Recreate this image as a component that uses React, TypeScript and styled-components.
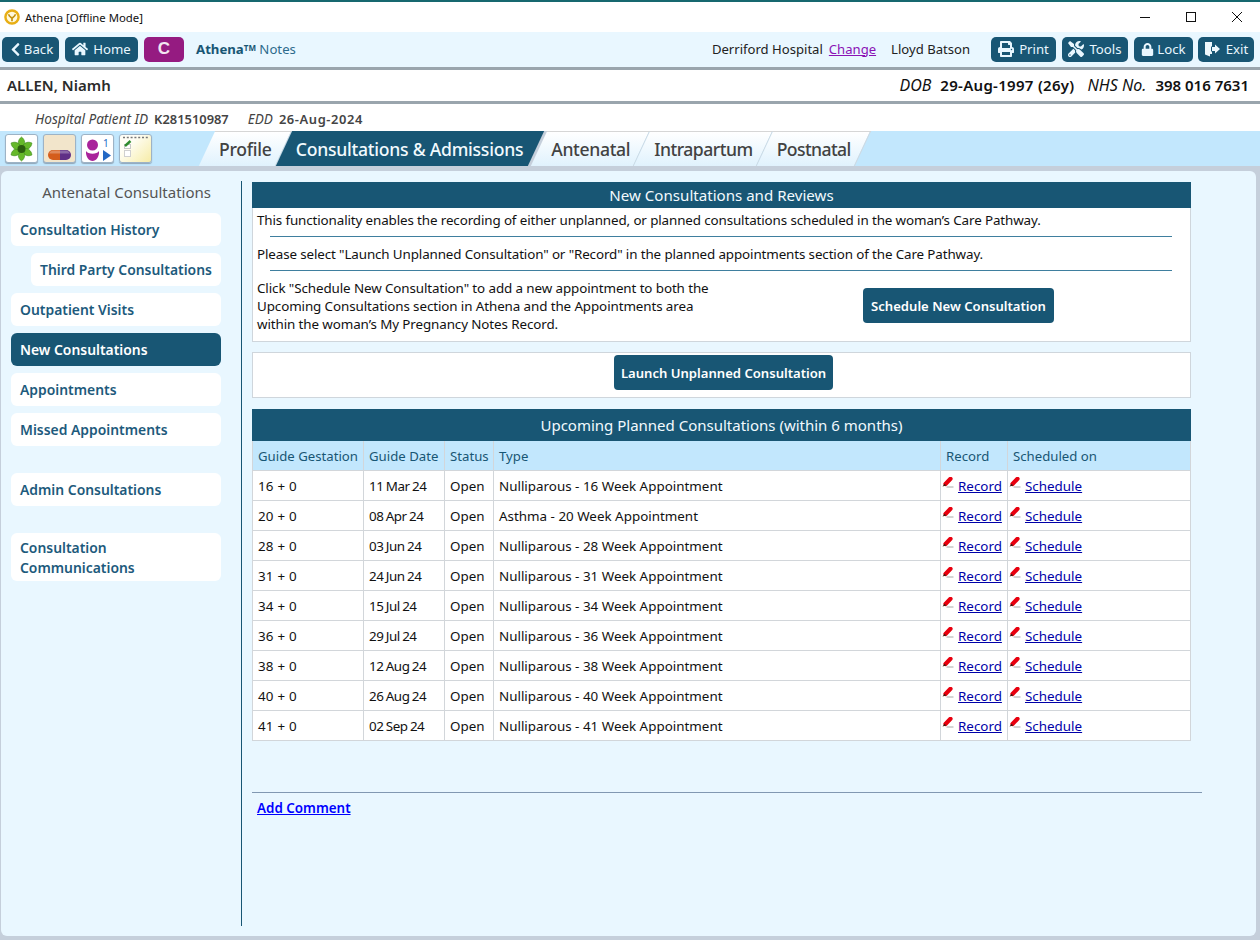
import React from "react";
import styled, { createGlobalStyle } from "styled-components";
import { FaChevronLeft, FaHome, FaPrint, FaTools, FaLock } from "react-icons/fa";

const Global = createGlobalStyle`
  html, body { margin: 0; padding: 0; background: #fff; }
  body { font-family: "Noto Sans", "Open Sans", sans-serif; font-size: 13.4px; color: #111; }
  * { box-sizing: border-box; }
`;

const Win = styled.div`width: 1260px; height: 940px; overflow: hidden; display: flex; flex-direction: column; background: #c5cfdb;`;
const TitleBar = styled.div`
  height: 32px; flex: none; background: #fff; border-top: 2px solid #17686f;
  display: flex; align-items: center; padding: 0 0 0 4px; font-size: 11.35px; color: #111; gap: 5px;
`;
const WinControls = styled.div`margin-left: auto; display: flex; align-items: center;`;
const WinBtn = styled.div`width: 46px; height: 30px; display: flex; align-items: center; justify-content: center;`;

const NavBar = styled.div`
  height: 38px; flex: none; background: #e9f7ff; border-bottom: 3px solid #9aa5ad;
  display: flex; align-items: center; padding: 1px 6px 1px 2px;
`;
const NavBtn = styled.div<{ $w: number; $ml?: number; $bg?: string; $gap?: number }>`
  width: ${p => p.$w}px; margin-left: ${p => p.$ml ?? 0}px; height: 25px; border-radius: 5px;
  background: ${p => p.$bg ?? "#185674"}; color: #e9f7ff; font-size: 13.2px; padding-bottom: 1px;
  display: flex; align-items: center; justify-content: center; gap: ${p => p.$gap ?? 5}px; flex: none;
`;
const CLetter = styled.span`font-family: "Liberation Sans", sans-serif; font-weight: 700; font-size: 17px; color: #f3e6f1;`;
const Brand = styled.div`margin: 0 0 2px 12px; color: #2d6b8c; font-size: 13.2px; b { color: #185674; font-weight: 700; } sup { font-size: 8px; font-weight: 700; color: #185674; vertical-align: 3px; line-height: 0; }`;
const NavRight = styled.div`margin-left: auto; display: flex; align-items: center; font-size: 13.1px; color: #222;`;
const NavText = styled.span`margin-bottom: 2px;`;
const ChangeLink = styled.a`color: #8a12b5; text-decoration: underline; margin: 0 15px 2px 6px;`;
const NavName = styled(NavText)`margin-right: 21px;`;

const PatientRow = styled.div`
  height: 34px; flex: none; background: #fff; border-bottom: 3px solid #9aa5ad;
  display: flex; align-items: center; padding: 0 11px 2px 7px; font-size: 15px; color: #111;
`;
const PatientName = styled.div`font-weight: 600; color: #2b2b2b;`;
const PatientRight = styled.div`margin-left: auto; display: flex; gap: 13px; align-items: baseline;`;
const Em = styled.i`font-weight: 400; margin-right: 9px; font-size: 16px;`;
const Strong = styled.span<{ $ls?: number }>`font-weight: 600; letter-spacing: ${p => p.$ls ?? 0}px;`;

const MetaRow = styled.div`
  height: 27px; flex: none; background: #fff; display: flex; align-items: center;
  padding-left: 35px; font-size: 13.6px; color: #444; gap: 19px; padding-top: 1px;
`;
const MetaVal = styled.span<{ $ls?: number }>`font-weight: 600; margin-left: 6px; font-size: 12.9px; letter-spacing: ${p => p.$ls ?? 0}px;`;

const TabBar = styled.div`
  height: 35px; flex: none; background: #c2e7fd; display: flex; align-items: stretch; padding-left: 5px; overflow: hidden;
`;
const Tools = styled.div`display: flex; gap: 5px; padding-top: 3px; width: 202px; flex: none;`;
const ToolBtn = styled.div<{ $bg?: string }>`
  width: 33px; height: 29px; border-radius: 3px; background: ${p => p.$bg ?? "#fff"};
  border: 1px solid #9db3c6; display: flex; box-shadow: 0 1px 1px #8fa6b8;
`;
const Tab = styled.div<{ $active?: boolean; $ls: number }>`
  position: relative; padding: 0 ${p => (p.$active ? 16 : 12)}px 0 12px;
  display: flex; align-items: center; font-size: 17.6px; letter-spacing: ${p => p.$ls}px; font-weight: 500; z-index: 0;
  color: ${p => (p.$active ? "#f2fafe" : "#424242")};
  &::before {
    content: ""; position: absolute; inset: 0; z-index: -1; transform: skewX(-25deg);
    background: ${p => (p.$active ? "#185674" : "linear-gradient(#fff, #e0f2fd)")};
    border-top: ${p => (p.$active ? "none" : "1px solid #d6d6d6")};
    border-right: ${p => (p.$active ? "4px solid #c5cfdb" : "1px solid #cfd8e0")};
  }
`;

const Panel = styled.div`
  flex: 1; margin: 5px 4px 4px 1px; background: #e9f7ff; border-radius: 6px; display: flex; min-height: 0; padding: 10px 0 10px 10px;
`;
const Side = styled.div`width: 231px; flex: none; border-right: 1px solid #185674; display: flex; flex-direction: column; padding-right: 20px;`;
const SideTitle = styled.div`text-align: right; padding-right: 10px; font-size: 15px; color: #555; height: 32px; line-height: 23px;`;
const SideItem = styled.div<{ $active?: boolean; $indent?: boolean; $gap?: number; $two?: boolean }>`
  margin-left: ${p => (p.$indent ? 20 : 0)}px; margin-bottom: ${p => p.$gap ?? 7}px;
  min-height: 33px; border-radius: 6px; padding: ${p => (p.$two ? "5px 9px 3px" : "7px 9px 6px")}; line-height: 20px; font-size: 13.9px; font-weight: 600;
  background: ${p => (p.$active ? "#185674" : "#fff")}; color: ${p => (p.$active ? "#fff" : "#1d5a7c")};
`;

const Main = styled.div`flex: 1; padding: 1px 0 0 10px; display: flex; flex-direction: column; min-width: 0;`;
const Box = styled.div`width: 939px; background: #fff; border: 1px solid #cfd6dc;`;
const FirstBox = styled(Box)`height: 160px; margin-bottom: 10px;`;
const BoxHead = styled.div`height: 26px; background: #185674; color: #f2fafe; font-size: 15.1px; display: flex; align-items: center; justify-content: center; margin: -1px -1px 0;`;
const Para = styled.div`padding: 3px 4px 0; height: 22px; line-height: 19px; white-space: nowrap; letter-spacing: -0.12px;`;
const Rule = styled.div`height: 1px; background: #3f7f9f; margin: 6px 18px 5px 17px;`;
const SchedRow = styled.div`display: flex; padding: 0 4px; margin-top: 8px; align-items: flex-start;`;
const SchedText = styled.div`width: 606px; line-height: 18px; flex: none; white-space: nowrap; letter-spacing: -0.1px;`;
const ActionBtn = styled.div<{ $w: number }>`
  width: ${p => p.$w}px; height: 35px; border-radius: 4px; background: #185674; color: #fff; font-weight: 600; font-size: 13.1px;
  display: inline-flex; align-items: center; justify-content: center; flex: none;
`;
const SchedBtn = styled(ActionBtn)`margin-top: 9px;`;
const LaunchBox = styled(Box)`height: 46px; display: flex; align-items: flex-start; justify-content: center; padding: 2px 0 0 4px; margin-bottom: 11px;`;

const Table = styled.table`
  width: 939px; border-collapse: collapse; background: #fff; table-layout: fixed;
  td, th { border: 1px solid #d2d6da; padding: 0 5px; font-weight: 400; text-align: left; height: 30px; white-space: nowrap; }
`;
const Col = styled.col<{ $w?: number }>`width: ${p => (p.$w ? `${p.$w}px` : "auto")};`;
const TitleCell = styled.th`
  && { background: #185674; color: #f2fafe; text-align: center; font-size: 15px; height: 31px; border-color: #185674; padding-bottom: 1px; }
`;
const HeadCell = styled.th`
  && { background: #c2e7fd; color: #185674; font-size: 13.2px; }
`;
const DateCell = styled.td`letter-spacing: -0.5px; word-spacing: -0.5px;`;
const GestCell = styled.td`letter-spacing: 0.2px;`;
const LinkCell = styled.td`&& { padding-left: 1px; }`;
const Linky = styled.a`color: #0000a8; text-decoration: underline; margin-left: 3px;`;
const PencilWrap = styled.span`display: inline-block; vertical-align: 1px; width: 13px; height: 13px; line-height: 0;`;

const Footer = styled.div`width: 950px; margin-top: 51px; border-top: 1px solid #8198b2; padding: 6px 5px;`;
const AddComment = styled.a`color: #0000ff; font-weight: 600; text-decoration: underline;`;

const Pencil = () => (
  <PencilWrap>
    <svg width="13" height="13" viewBox="0 0 13 13">
      <path d="M3.5 7 L8.5 1.8" stroke="#e8000f" strokeWidth="4.2" strokeLinecap="round" />
      <path d="M0.5 9.6 L2.6 6.8 L4.2 8.6 Z" fill="#3a1a10" />
      <path d="M4.5 10 H11.5" stroke="#a8a8a8" strokeWidth="1" />
    </svg>
  </PencilWrap>
);

const ExitIcon = () => (
  <svg width="17" height="16" viewBox="0 0 17 16" fill="#eef8fd">
    <path d="M1 1 H8 V5.5 H7 V10.5 H8 V13 H6 V15.5 L1 13.5 Z" />
    <path d="M8 6 H11 V3.5 L16 8 L11 12.5 V10 H8 Z" />
  </svg>
);

const leafAngles = [0, 60, 120, 180, 240, 300];

const rows = [
  ["16 + 0", "11 Mar 24", "Nulliparous - 16 Week Appointment"],
  ["20 + 0", "08 Apr 24", "Asthma - 20 Week Appointment"],
  ["28 + 0", "03 Jun 24", "Nulliparous - 28 Week Appointment"],
  ["31 + 0", "24 Jun 24", "Nulliparous - 31 Week Appointment"],
  ["34 + 0", "15 Jul 24", "Nulliparous - 34 Week Appointment"],
  ["36 + 0", "29 Jul 24", "Nulliparous - 36 Week Appointment"],
  ["38 + 0", "12 Aug 24", "Nulliparous - 38 Week Appointment"],
  ["40 + 0", "26 Aug 24", "Nulliparous - 40 Week Appointment"],
  ["41 + 0", "02 Sep 24", "Nulliparous - 41 Week Appointment"],
];

export default function App() {
  return (
    <Win>
      <Global />
      <TitleBar>
        <svg width="16" height="16" viewBox="0 0 17 17">
          <circle cx="8.5" cy="8.5" r="7" fill="#fff8dc" stroke="#e8ae14" strokeWidth="2.6" />
          <path d="M5 5.5 C5 8 7 8.5 8.5 9.5 C10 8.5 12 8 12 5.5 M8.5 9.5 V13" stroke="#c4920f" strokeWidth="1.8" fill="none" />
        </svg>
        <span>Athena [Offline Mode]</span>
        <WinControls>
          <WinBtn><svg width="12" height="12"><path d="M1 6.5 H11" stroke="#111" /></svg></WinBtn>
          <WinBtn><svg width="12" height="12"><rect x="1.5" y="1.5" width="9" height="9" fill="none" stroke="#111" /></svg></WinBtn>
          <WinBtn><svg width="12" height="12"><path d="M1 1 L11 11 M11 1 L1 11" stroke="#111" /></svg></WinBtn>
        </WinControls>
      </TitleBar>

      <NavBar>
        <NavBtn $w={57} $gap={1}><FaChevronLeft size={15} />Back</NavBtn>
        <NavBtn $w={73} $ml={6}><FaHome size={16} />Home</NavBtn>
        <NavBtn $w={40} $ml={6} $bg="#951b81"><CLetter>C</CLetter></NavBtn>
        <Brand><b>Athena</b><sup>TM</sup> Notes</Brand>
        <NavRight>
          <NavText>Derriford Hospital</NavText>
          <ChangeLink>Change</ChangeLink>
          <NavName>Lloyd Batson</NavName>
          <NavBtn $w={65}><FaPrint size={16} />Print</NavBtn>
          <NavBtn $w={66} $ml={6}><FaTools size={16} />Tools</NavBtn>
          <NavBtn $w={59} $ml={6} $gap={3}><FaLock size={13} />Lock</NavBtn>
          <NavBtn $w={56} $ml={5}><ExitIcon />Exit</NavBtn>
        </NavRight>
      </NavBar>

      <PatientRow>
        <PatientName>ALLEN, Niamh</PatientName>
        <PatientRight>
          <span><Em>DOB</Em><Strong $ls={0.3}>29-Aug-1997 (26y)</Strong></span>
          <span><Em>NHS No.</Em><Strong>398 016 7631</Strong></span>
        </PatientRight>
      </PatientRow>

      <MetaRow>
        <span><i>Hospital Patient ID</i><MetaVal>K281510987</MetaVal></span>
        <span><i>EDD</i><MetaVal $ls={0.6}>26-Aug-2024</MetaVal></span>
      </MetaRow>

      <TabBar>
        <Tools>
          <ToolBtn>
            <svg width="31" height="27" viewBox="0 0 31 27">
              {leafAngles.map(a => (
                <path key={a} d="M15.5 14 C10.5 9.5 12 4.5 15.5 2 C19 4.5 20.5 9.5 15.5 14 Z" fill="#66b82a" stroke="#3f8f1c" strokeWidth="0.6" transform={`rotate(${a} 15.5 14)`} />
              ))}
              <circle cx="15.5" cy="14" r="4" fill="#2c5d10" />
            </svg>
          </ToolBtn>
          <ToolBtn $bg="#f2e5cb">
            <svg width="31" height="27" viewBox="0 0 31 27">
              <path d="M9 15 H16 V25 H9 A5 5 0 0 1 9 15 Z" fill="#d45d1c" />
              <path d="M16 15 H22 A5 5 0 0 1 22 25 H16 Z" fill="#5f2f86" />
              <path d="M9 15.5 H22 A5 4 0 0 1 26 18.5 H5 A5 4 0 0 1 9 15.5 Z" fill="#fff" opacity=".28" />
            </svg>
          </ToolBtn>
          <ToolBtn>
            <svg width="31" height="27" viewBox="0 0 31 27">
              <circle cx="10.5" cy="10" r="5.5" fill="#a9239b" />
              <path d="M4 16 C6 19.5 15 19.5 17 16 C17.5 22 14 26 10.5 26 C7 26 3.5 22 4 16 Z" fill="#a9239b" />
              <path d="M21 15 L29 20.5 L21 26 Z" fill="#2368c4" />
              <text x="21" y="12" fontSize="10" fill="#2368c4" fontFamily="Noto Sans, sans-serif">1</text>
            </svg>
          </ToolBtn>
          <ToolBtn $bg="linear-gradient(135deg,#fffef6 30%,#f6eca6)">
            <svg width="31" height="27" viewBox="0 0 31 27">
              <path d="M3 2.5 H29" stroke="#777" strokeWidth="1.4" strokeDasharray="2 1.8" />
              <rect x="4.5" y="9.5" width="6" height="4" fill="#fff" stroke="#c8c8c8" />
              <rect x="4.5" y="15.5" width="6" height="6" fill="#fff" stroke="#d0d0d0" />
              <path d="M5 11 L10.5 6" stroke="#2e8b2e" strokeWidth="2.4" />
            </svg>
          </ToolBtn>
        </Tools>
        <Tab $ls={-0.25}>Profile</Tab>
        <Tab $active $ls={-0.25}>Consultations &amp; Admissions</Tab>
        <Tab $ls={-0.35}>Antenatal</Tab>
        <Tab $ls={-0.5}>Intrapartum</Tab>
        <Tab $ls={-0.6}>Postnatal</Tab>
      </TabBar>

      <Panel>
        <Side>
          <SideTitle>Antenatal Consultations</SideTitle>
          <SideItem>Consultation History</SideItem>
          <SideItem $indent>Third Party Consultations</SideItem>
          <SideItem>Outpatient Visits</SideItem>
          <SideItem $active>New Consultations</SideItem>
          <SideItem>Appointments</SideItem>
          <SideItem $gap={27}>Missed Appointments</SideItem>
          <SideItem $gap={27}>Admin Consultations</SideItem>
          <SideItem $two>Consultation Communications</SideItem>
        </Side>
        <Main>
          <FirstBox>
            <BoxHead>New Consultations and Reviews</BoxHead>
            <Para>This functionality enables the recording of either unplanned, or planned consultations scheduled in the woman’s Care Pathway.</Para>
            <Rule />
            <Para>Please select "Launch Unplanned Consultation" or "Record" in the planned appointments section of the Care Pathway.</Para>
            <Rule />
            <SchedRow>
              <SchedText>
                Click "Schedule New Consultation" to add a new appointment to both the<br />
                Upcoming Consultations section in Athena and the Appointments area<br />
                within the woman’s My Pregnancy Notes Record.
              </SchedText>
              <SchedBtn $w={191}>Schedule New Consultation</SchedBtn>
            </SchedRow>
          </FirstBox>
          <LaunchBox>
            <ActionBtn $w={219}>Launch Unplanned Consultation</ActionBtn>
          </LaunchBox>
          <Table>
            <colgroup>
              <Col $w={111} />
              <Col $w={81} />
              <Col $w={49} />
              <Col $w={447} />
              <Col $w={67} />
              <Col />
            </colgroup>
            <thead>
              <tr><TitleCell colSpan={6}>Upcoming Planned Consultations (within 6 months)</TitleCell></tr>
              <tr>
                <HeadCell>Guide Gestation</HeadCell>
                <HeadCell>Guide Date</HeadCell>
                <HeadCell>Status</HeadCell>
                <HeadCell>Type</HeadCell>
                <HeadCell>Record</HeadCell>
                <HeadCell>Scheduled on</HeadCell>
              </tr>
            </thead>
            <tbody>
              {rows.map(r => (
                <tr key={r[0]}>
                  <GestCell>{r[0]}</GestCell>
                  <DateCell>{r[1]}</DateCell>
                  <td>Open</td>
                  <td>{r[2]}</td>
                  <LinkCell><Pencil /><Linky>Record</Linky></LinkCell>
                  <LinkCell><Pencil /><Linky>Schedule</Linky></LinkCell>
                </tr>
              ))}
            </tbody>
          </Table>
          <Footer><AddComment>Add Comment</AddComment></Footer>
        </Main>
      </Panel>
    </Win>
  );
}
